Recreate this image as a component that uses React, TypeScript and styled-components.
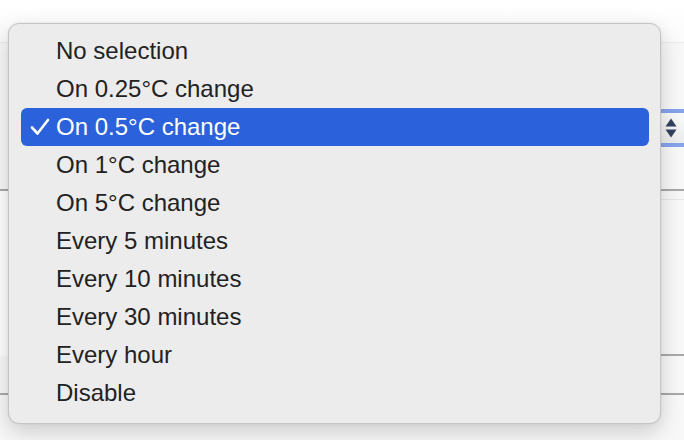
import styled, { createGlobalStyle } from "styled-components";

const GlobalStyle = createGlobalStyle`
    html, body {
        margin: 0;
        padding: 0;
        background: #ffffff;
    }
    body {
        font-family: "Liberation Sans", Arial, sans-serif;
    }
`;

const options = [
    "No selection",
    "On 0.25°C change",
    "On 0.5°C change",
    "On 1°C change",
    "On 5°C change",
    "Every 5 minutes",
    "Every 10 minutes",
    "Every 30 minutes",
    "Every hour",
    "Disable",
];

const selectedIndex = 2;

export default function App() {
    return (
        <>
            <GlobalStyle />
            <Page>
                <Window>
                    <Header />
                    <Section $height={146}>
                        <SelectControl>
                            <svg width="12" height="22" viewBox="0 0 12 22">
                                <path d="M6 1.5 L11.5 9.5 L0.5 9.5 Z" fill="#33405e" />
                                <path d="M6 20.5 L11.5 12.5 L0.5 12.5 Z" fill="#33405e" />
                            </svg>
                        </SelectControl>
                    </Section>
                    <Section $height={163} $inset>
                        <Faint />
                    </Section>
                    <Section $height={37} />
                    <Section $height={48} $plain />
                </Window>

                <Menu>
                    {options.map((label, i) => (
                        <Item key={label} $active={i === selectedIndex}>
                            <Check>
                                {i === selectedIndex && (
                                    <svg width="20" height="18" viewBox="0 0 20 18">
                                        <path
                                            d="M2 9.5 L7.5 15.5 L18 2"
                                            fill="none"
                                            stroke="#ffffff"
                                            strokeWidth="2.6"
                                            strokeLinecap="round"
                                            strokeLinejoin="round"
                                        />
                                    </svg>
                                )}
                            </Check>
                            <Label>{label}</Label>
                        </Item>
                    ))}
                </Menu>
            </Page>
        </>
    );
}

const Page = styled.div`
    position: relative;
    width: 684px;
    height: 440px;
    overflow: hidden;
    background: #ffffff;
`;

const Window = styled.div`
    display: flex;
    flex-direction: column;
    width: 100%;
    height: 100%;
`;

const Header = styled.div`
    height: 42px;
    flex-shrink: 0;
    background: linear-gradient(#ffffff, #fbfbfb);
    border-bottom: 1px solid #ececec;
`;

const Section = styled.div<{ $height: number; $inset?: boolean; $plain?: boolean }>`
    position: relative;
    height: ${(p) => p.$height}px;
    flex-shrink: 0;
    background: #f8f8f8;
    border-bottom: ${(p) => (p.$plain ? "none" : "2px solid #a9a9a9")};
    ${(p) => (p.$inset ? "margin-left: 40px;" : "")}
    display: flex;
    flex-direction: column;
    align-items: flex-end;
`;

const Faint = styled.div`
    height: 8px;
    width: 100%;
    border-bottom: 1px solid #e6e6e6;
`;

const SelectControl = styled.div`
    margin-top: 66px;
    margin-right: -25px;
    width: 40px;
    height: 30px;
    padding-left: 9px;
    box-sizing: content-box;
    border: 4px solid #86a3ec;
    border-radius: 10px;
    background: linear-gradient(#fafafa, #ececec);
    display: flex;
    align-items: center;
    svg {
        display: block;
    }
`;

const Menu = styled.div`
    position: absolute;
    left: 8px;
    top: 23px;
    width: 653px;
    height: 401px;
    box-sizing: border-box;
    padding: 8px 11px 0 12px;
    background: #ececec;
    border: 1px solid #c4c4c4;
    border-radius: 11px;
    box-shadow: 0 8px 22px rgba(0, 0, 0, 0.18), 0 0 2px rgba(0, 0, 0, 0.1);
    display: flex;
    flex-direction: column;
`;

const Item = styled.div<{ $active?: boolean }>`
    display: flex;
    align-items: center;
    height: 38px;
    flex-shrink: 0;
    border-radius: 6px;
    background: ${(p) => (p.$active ? "#2b62db" : "transparent")};
    color: ${(p) => (p.$active ? "#ffffff" : "#222222")};
`;

const Check = styled.span`
    width: 35px;
    flex-shrink: 0;
    padding-left: 9px;
    box-sizing: border-box;
    display: flex;
    align-items: center;
    svg {
        display: block;
    }
`;

const Label = styled.span`
    font-family: "Liberation Sans", Arial, sans-serif;
    font-size: 24px;
    line-height: 1;
`;
